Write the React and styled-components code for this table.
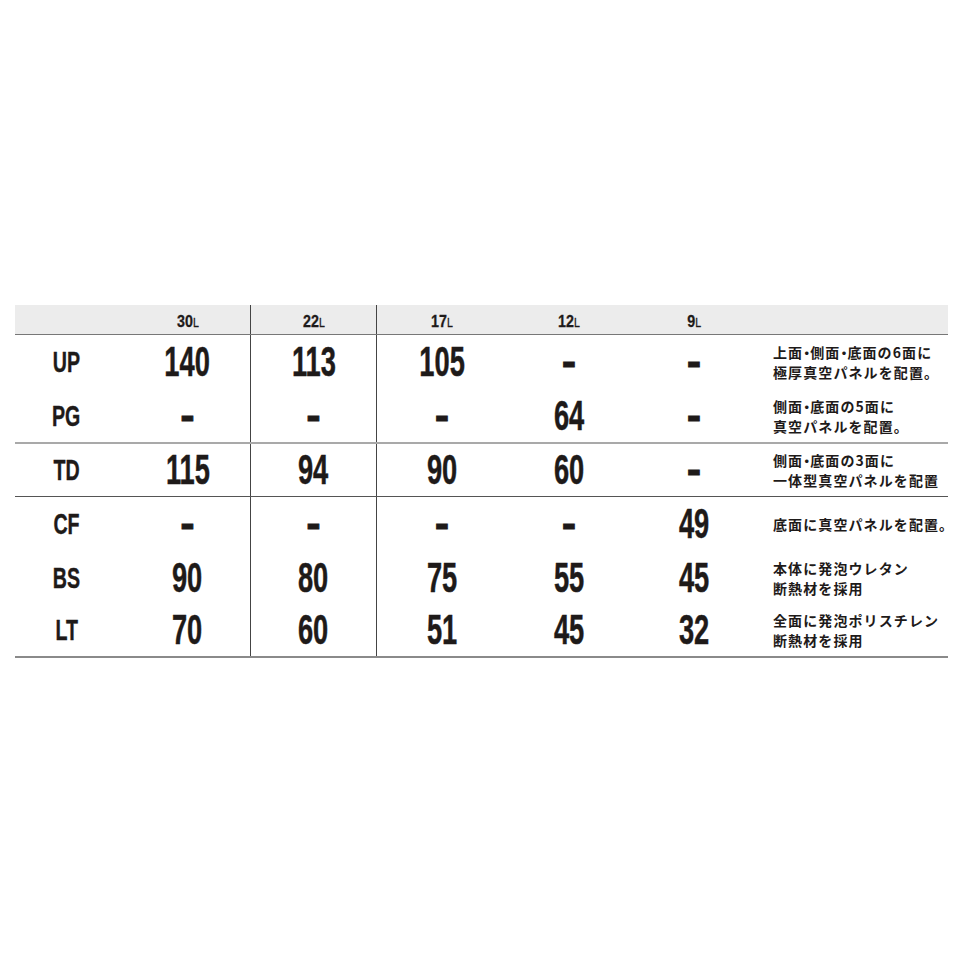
import React from 'react'
import styled, { createGlobalStyle } from 'styled-components'

const GlobalStyle = createGlobalStyle`
  html, body {
    margin: 0;
    padding: 0;
    background: #fff;
  }
  body {
    font-family: 'Liberation Sans', Arial, sans-serif;
    color: #1e1a19;
  }
`

const cols = '110px 126px 126px 130px 124px 126px 1fr'

const Page = styled.div`
  width: 962px;
  height: 962px;
  padding: 305px 14px 0 15px;
  box-sizing: border-box;
`

const Table = styled.div`
  display: flex;
  flex-direction: column;
  width: 933px;
`

const HeaderRow = styled.div`
  display: grid;
  grid-template-columns: ${cols};
  height: 29px;
  background: #ececec;
  border-bottom: 1px solid #777;
`

const Group = styled.div`
  display: flex;
  flex-direction: column;
  border-bottom: ${(p) => p.$line};
`

const Row = styled.div`
  display: grid;
  grid-template-columns: ${cols};
  height: ${(p) => p.$h}px;
`

const Cell = styled.div`
  display: flex;
  align-items: center;
  justify-content: center;
  border-right: ${(p) => (p.$divider ? '1px solid #444' : 'none')};
  box-sizing: border-box;
`

const HeadLabel = styled.span`
  display: inline-block;
  padding-top: 5px;
  transform: scaleX(0.84);
  font-size: 17px;
  font-weight: 700;
  -webkit-text-stroke: 0.3px #1e1a19;
`

const Unit = styled.span`
  font-size: 12.5px;
  font-weight: 400;
  -webkit-text-stroke: 0.3px #1e1a19;
`

const LabelCell = styled.div`
  display: flex;
  align-items: center;
  justify-content: center;
  padding-right: 7px;
`

const Label = styled.span`
  display: inline-block;
  transform: scaleX(0.67);
  font-size: 29.3px;
  font-weight: 700;
  line-height: 1;
  -webkit-text-stroke: 0.4px #1e1a19;
`

const Num = styled.span`
  display: inline-block;
  transform: scaleX(${(p) => (p.$dash ? 1 : 0.63)});
  font-size: 43.3px;
  font-weight: 700;
  line-height: 1;
  -webkit-text-stroke: ${(p) => (p.$dash ? '0.8px' : '0.5px')} #1e1a19;
`

const Desc = styled.div`
  display: flex;
  flex-direction: column;
  justify-content: center;
  padding-left: 16px;
  font-family: 'Noto Sans CJK JP', 'Noto Sans', sans-serif;
  font-size: 14px;
  font-weight: 700;
  letter-spacing: 1.1px;
  line-height: 20px;
  white-space: nowrap;
`

const Dot = styled.span`
  font-feature-settings: 'palt' 1;
  letter-spacing: 0;
`

const sizes = ['30', '22', '17', '12', '9']

const withDots = (line) =>
  line.split('・').flatMap((part, i) =>
    i === 0 ? [part] : [<Dot key={i}>・</Dot>, part]
  )

const groups = [
  {
    line: '2px solid #a9a9a9',
    rows: [
      { h: 54, label: 'UP', vals: ['140', '113', '105', '-', '-'], desc: ['上面・側面・底面の6面に', '極厚真空パネルを配置。'] },
      { h: 53, label: 'PG', vals: ['-', '-', '-', '64', '-'], desc: ['側面・底面の5面に', '真空パネルを配置。'] },
    ],
  },
  {
    line: '1px solid #555',
    rows: [
      { h: 52, label: 'TD', vals: ['115', '94', '90', '60', '-'], desc: ['側面・底面の3面に', '一体型真空パネルを配置'] },
    ],
  },
  {
    line: '2px solid #8a8a8a',
    rows: [
      { h: 54, label: 'CF', vals: ['-', '-', '-', '-', '49'], desc: ['底面に真空パネルを配置。'] },
      { h: 53, label: 'BS', vals: ['90', '80', '75', '55', '45'], desc: ['本体に発泡ウレタン', '断熱材を採用'] },
      { h: 52, label: 'LT', vals: ['70', '60', '51', '45', '32'], desc: ['全面に発泡ポリスチレン', '断熱材を採用'] },
    ],
  },
]

export default function App() {
  return (
    <Page>
      <GlobalStyle />
      <Table>
        <HeaderRow>
          <Cell />
          {sizes.map((s, i) => (
            <Cell key={s} $divider={i < 2}>
              <HeadLabel>
                {s}
                <Unit>L</Unit>
              </HeadLabel>
            </Cell>
          ))}
          <Cell />
        </HeaderRow>
        {groups.map((g, gi) => (
          <Group key={gi} $line={g.line}>
            {g.rows.map((r) => (
              <Row key={r.label} $h={r.h}>
                <LabelCell>
                  <Label>{r.label}</Label>
                </LabelCell>
                {r.vals.map((v, i) => (
                  <Cell key={i} $divider={i < 2}>
                    <Num $dash={v === '-'}>{v}</Num>
                  </Cell>
                ))}
                <Desc>
                  {r.desc.map((line) => (
                    <div key={line}>{withDots(line)}</div>
                  ))}
                </Desc>
              </Row>
            ))}
          </Group>
        ))}
      </Table>
    </Page>
  )
}
